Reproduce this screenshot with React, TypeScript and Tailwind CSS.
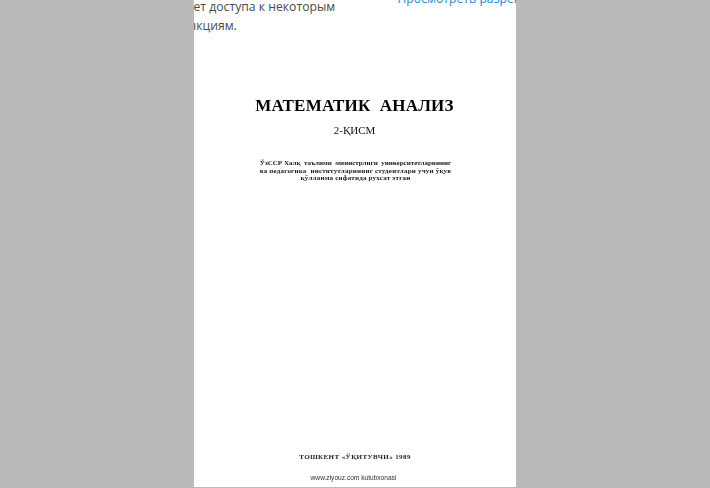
export default function App() {
  return (
    <div className="h-[488px] w-[710px] overflow-hidden bg-[#bababa] flex justify-center">
      <div className="w-[322px] h-[487px] bg-white overflow-hidden flex flex-col ml-[-1px]">
        <div className="flex h-[34px] shrink-0 text-[12.2px] leading-[19px] whitespace-nowrap font-['Open_Sans',sans-serif] text-[#4a4a4a]">
          <div className="w-[204px] shrink-0 mt-[-3px]">
            <div>ет доступа к некоторым</div>
            <div className="ml-[-5px]">нкциям.</div>
          </div>
          <div className="text-[#1e88d2] mt-[-11px]">Просмотреть разрешения</div>
        </div>
        <div className="flex flex-col items-center font-['Liberation_Serif',serif] text-[#111] flex-1 blur-[0.3px]">
          <div className="mt-[60px] text-[17px] leading-[24px] font-bold tracking-[0.25px] whitespace-pre text-black">МАТЕМАТИК  АНАЛИЗ</div>
          <div className="mt-[5px] text-[11px] leading-[14px]">2-ҚИСМ</div>
          <div className="mt-[23px] ml-[2px] text-[7px] leading-[7.5px] text-center font-bold text-[#222] whitespace-pre">
            <div>ЎзССР Халқ  таълими  министрлиги  университетларининг</div>
            <div className="tracking-[0.2px]">ва педагогика  институтларининг студентлари учун ўқув</div>
            <div className="tracking-[0.2px]">қўлланма сифатида рухсат этган</div>
          </div>
          <div className="mt-[269px] ml-[1px] text-[7px] leading-[10px] font-bold text-[#222] whitespace-pre tracking-[0.4px]">ТОШКЕНТ «ЎҚИТУВЧИ» 1989</div>
          <div className="mt-[11px] ml-[-2px] text-[6.6px] leading-[9px] text-[#333] font-['Liberation_Sans',sans-serif]">www.ziyouz.com kutubxonasi</div>
        </div>
      </div>
    </div>
  );
}
